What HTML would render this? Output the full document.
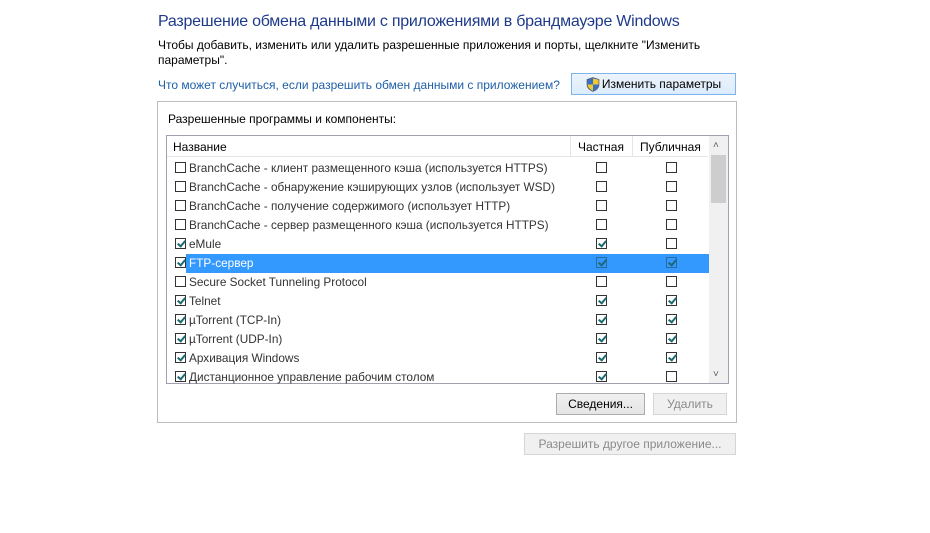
<!DOCTYPE html>
<html><head><meta charset="utf-8"><style>
*{margin:0;padding:0;box-sizing:border-box}
body{width:930px;height:533px;background:#fff;font-family:"Liberation Sans",sans-serif;font-size:12px;color:#000;position:relative;overflow:hidden}
.a{position:absolute;white-space:nowrap;line-height:14px}
.btn{position:absolute;border:1px solid #acacac;background:linear-gradient(#f0f0f0,#e5e5e5);text-align:center;font-size:12px}
.cb{position:absolute;width:11px;height:11px;border:1px solid #333;background:#fff}
.cb.c::after{content:"";position:absolute;left:3px;top:0px;width:3px;height:6px;border:solid #1a6a70;border-width:0 2px 2px 0;transform:rotate(40deg)}
</style></head><body>
<div class="a" style="left:158px;top:13px;font-size:16px;line-height:18px;color:#1e3a8a;letter-spacing:-0.25px">Разрешение обмена данными с приложениями в брандмауэре Windows</div>
<div class="a" style="left:158px;top:38px;font-size:12px">Чтобы добавить, изменить или удалить разрешенные приложения и порты, щелкните "Изменить</div>
<div class="a" style="left:158px;top:53px;font-size:12px">параметры".</div>
<div class="a" style="left:158px;top:78px;color:#1f5fa8;font-size:12px">Что может случиться, если разрешить обмен данными с приложением?</div>
<div class="btn" style="left:571px;top:73px;width:165px;height:22px;border-color:#7eb4ea;background:linear-gradient(#ecf4fc,#dcecfc);line-height:20px;padding-left:16px">
<svg style="position:absolute;left:14px;top:3px" width="14" height="15" viewBox="0 0 14 15"><path d="M7 0.5L13 2.5V7.5C13 11 10 13.5 7 14.5C4 13.5 1 11 1 7.5V2.5Z" fill="#3a6fc4" stroke="#555" stroke-width=".6"/><path d="M7 1.5V7.5H12.5V2.8ZM7 7.5V13.8C4.5 12.8 1.8 10.6 1.6 7.5Z" fill="#f2c82a"/></svg>
Изменить параметры</div>
<div class="a" style="left:157px;top:101px;width:580px;height:322px;border:1px solid #bcbcbc"></div>
<div class="a" style="left:168px;top:112px">Разрешенные программы и компоненты:</div>
<div class="a" style="left:166px;top:135px;width:563px;height:249px;border:1px solid #a0a0b0;background:#fff"></div>
<div class="a" style="left:167px;top:136px;width:541px;height:21px;border-bottom:1px solid #e5e5e5"></div>
<div class="a" style="left:570px;top:136px;width:1px;height:21px;background:#e5e5e5"></div>
<div class="a" style="left:632px;top:136px;width:1px;height:21px;background:#e5e5e5"></div>
<div class="a" style="left:173px;top:140px">Название</div>
<div class="a" style="left:578px;top:140px">Частная</div>
<div class="a" style="left:640px;top:140px">Публичная</div>
<div class="a" style="left:709px;top:136px;width:19px;height:247px;background:#f0f0f0"></div>
<div class="a" style="left:711px;top:155px;width:15px;height:48px;background:#cdcdcd"></div>
<div class="a" style="left:713px;top:139px;font-size:10px;color:#606060">&#x2C4;</div>
<div class="a" style="left:713px;top:368px;font-size:10px;color:#606060">&#x2C5;</div>
<div class="a" style="left:186px;top:254px;width:523px;height:19px;background:#3399ff"></div>
<div id="rows"></div>
<div class="btn" style="left:556px;top:393px;width:89px;height:22px;line-height:20px">Сведения...</div>
<div class="btn" style="left:653px;top:393px;width:74px;height:22px;line-height:20px;color:#8a8a8a;border-color:#d5d5d5;background:#f0f0f0">Удалить</div>
<div class="btn" style="left:524px;top:433px;width:212px;height:22px;line-height:20px;color:#8a8a8a;border-color:#d5d5d5;background:#f0f0f0">Разрешить другое приложение...</div>
<script>
var d=[["BranchCache - клиент размещенного кэша (используется HTTPS)",0,0,0],["BranchCache - обнаружение кэширующих узлов (использует WSD)",0,0,0],["BranchCache - получение содержимого (использует HTTP)",0,0,0],["BranchCache - сервер размещенного кэша (используется HTTPS)",0,0,0],["eMule",1,1,0],["FTP-сервер",1,1,1],["Secure Socket Tunneling Protocol",0,0,0],["Telnet",1,1,1],["µTorrent (TCP-In)",1,1,1],["µTorrent (UDP-In)",1,1,1],["Архивация Windows",1,1,1],["Дистанционное управление рабочим столом",1,1,0]];
var h="";d.forEach(function(r,i){var y=162+i*19;var sel=i==5;
h+='<div class="cb'+(r[1]?' c':'')+'" style="left:175px;top:'+y+'px"></div>';
h+='<div class="a" style="left:189px;top:'+(y-1)+'px;font-size:11.8px;color:'+(sel?'#fff':'#333')+'">'+r[0]+'</div>';
h+='<div class="cb'+(r[2]?' c':'')+'" style="left:596px;top:'+y+'px'+(sel?';background:#3399ff;border-color:#2a6aa0':'')+'"></div>';
h+='<div class="cb'+(r[3]?' c':'')+'" style="left:666px;top:'+y+'px'+(sel?';background:#3399ff;border-color:#2a6aa0':'')+'"></div>';});
document.getElementById("rows").innerHTML=h;
</script>
</body></html>
